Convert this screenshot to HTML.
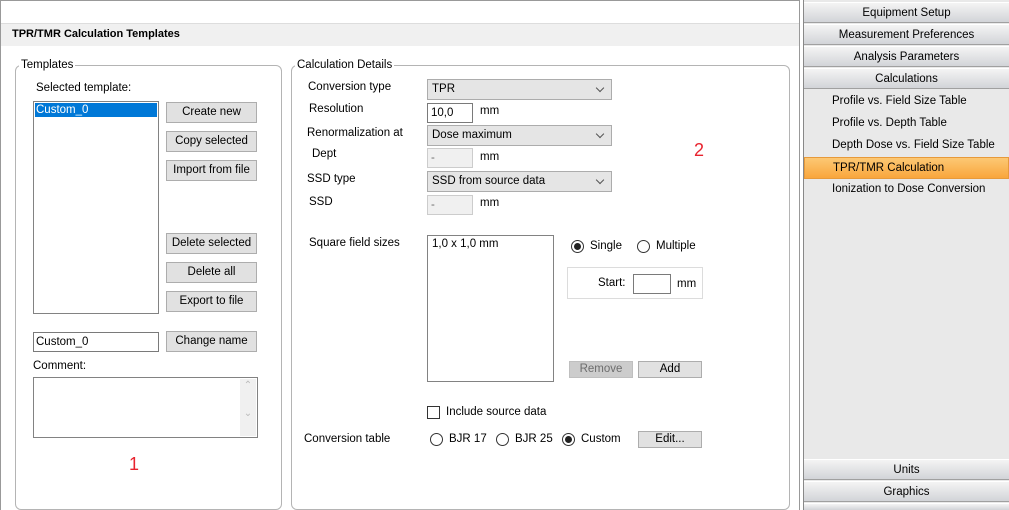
<!DOCTYPE html><html style="overflow:hidden;height:510px"><head><style>
*{box-sizing:border-box;margin:0;padding:0}
body{width:1009px;height:510px;overflow:hidden;background:#fff;font-family:"Liberation Sans",sans-serif;font-size:11.5px;color:#000;position:relative}
.a{position:absolute;white-space:nowrap}
.btn{position:absolute;background:#e1e1e1;border:1px solid #adadad;text-align:center;line-height:19px;height:21px}
.grp{position:absolute;border:1px solid #b4b4b4;border-radius:6px}
.lg{position:absolute;background:#fff;padding:0 2px;top:-8px;left:3px;line-height:14px}
.cb{position:absolute;background:#e5e5e5;border:1px solid #acacac;height:21px;line-height:19px;padding-left:4px}
.cb:after{content:"";position:absolute;right:8px;top:5px;width:5px;height:5px;border-right:1px solid #555;border-bottom:1px solid #555;transform:rotate(45deg)}
.tb{position:absolute;border:1px solid #7a7a7a;background:#fff;height:21px;line-height:19px;padding-left:3px}
.dis{background:#f0f0f0;border-color:#ccc;color:#6d6d6d}
.rd{position:absolute;width:13px;height:13px;border:1px solid #333;border-radius:50%;background:#fff}
.rd.on:after{content:"";position:absolute;left:2px;top:2px;width:7px;height:7px;border-radius:50%;background:#222}
.hd{position:absolute;left:804px;width:205px;height:21px;text-align:center;line-height:21px;background:linear-gradient(#f4f4f4,#d2d4d8);border-top:1px solid #fff;border-bottom:1px solid #a0a0a0}
.it{position:absolute;left:832px;line-height:14px}
</style></head><body>
<div class="a" style="left:0;top:0;width:800px;height:510px;border-left:1px solid #999;border-top:1px solid #999;border-right:1px solid #999"></div>
<div class="a" style="left:1px;top:23px;width:798px;height:23px;background:#f0f0f0;border-top:1px solid #ddd"></div>
<div class="a" style="left:12px;top:28px;font-weight:bold;font-size:11px">TPR/TMR Calculation Templates</div>
<div class="a" style="left:803px;top:0;width:206px;height:510px;background:#e9e9e9;border-left:1px solid #888"></div>
<div class="hd" style="top:2px">Equipment Setup</div>
<div class="hd" style="top:24px">Measurement Preferences</div>
<div class="hd" style="top:46px">Analysis Parameters</div>
<div class="hd" style="top:68px">Calculations</div>
<div class="it" style="top:94px">Profile vs. Field Size Table</div>
<div class="it" style="top:116px">Profile vs. Depth Table</div>
<div class="it" style="top:138px">Depth Dose vs. Field Size Table</div>
<div class="a" style="left:804px;top:157px;width:205px;height:22px;background:linear-gradient(#fcc874,#f9a63c);border:1px solid #e79a3b"></div>
<div class="it" style="top:161px;left:833px">TPR/TMR Calculation</div>
<div class="it" style="top:182px">Ionization to Dose Conversion</div>
<div class="hd" style="top:459px">Units</div>
<div class="hd" style="top:481px">Graphics</div>
<div class="hd" style="top:503px;height:7px;border-bottom:0"></div>

<div class="grp" style="left:15px;top:65px;width:267px;height:445px"><div class="lg">Templates</div></div>
<div class="a" style="left:36px;top:82px">Selected template:</div>
<div class="a" style="left:33px;top:101px;width:126px;height:213px;border:1px solid #828282"></div>
<div class="a" style="left:35px;top:103px;width:122px;height:14px;background:#0078d7;color:#fff;line-height:14px;padding-left:1px">Custom_0</div>
<div class="btn" style="left:166px;top:102px;width:91px">Create new</div>
<div class="btn" style="left:166px;top:131px;width:91px">Copy selected</div>
<div class="btn" style="left:166px;top:160px;width:91px">Import from file</div>
<div class="btn" style="left:166px;top:233px;width:91px">Delete selected</div>
<div class="btn" style="left:166px;top:262px;width:91px">Delete all</div>
<div class="btn" style="left:166px;top:291px;width:91px">Export to file</div>
<div class="tb" style="left:33px;top:332px;width:126px;height:20px;line-height:18px;padding-left:2px">Custom_0</div>
<div class="btn" style="left:166px;top:331px;width:91px">Change name</div>
<div class="a" style="left:33px;top:360px">Comment:</div>
<div class="a" style="left:33px;top:377px;width:225px;height:61px;border:1px solid #828282"></div>
<div class="a" style="left:240px;top:379px;width:16px;height:57px;background:#f0f0f0;color:#bbb;font-size:10px;text-align:center;line-height:14px">&#8963;<br><br>&#8964;</div>
<div class="a" style="left:129px;top:454px;color:#e8232e;font-size:18px">1</div>

<div class="grp" style="left:291px;top:65px;width:499px;height:445px"><div class="lg">Calculation Details</div></div>
<div class="a" style="left:308px;top:81px">Conversion type</div>
<div class="cb" style="left:427px;top:79px;width:185px">TPR</div>
<div class="a" style="left:309px;top:103px">Resolution</div>
<div class="tb" style="left:427px;top:103px;width:46px;height:20px;line-height:18px">10,0</div>
<div class="a" style="left:480px;top:105px">mm</div>
<div class="a" style="left:307px;top:127px">Renormalization at</div>
<div class="cb" style="left:427px;top:125px;width:185px">Dose maximum</div>
<div class="a" style="left:312px;top:148px">Dept</div>
<div class="tb dis" style="left:427px;top:148px;width:46px;height:20px">-</div>
<div class="a" style="left:480px;top:151px">mm</div>
<div class="a" style="left:307px;top:173px">SSD type</div>
<div class="cb" style="left:427px;top:171px;width:185px">SSD from source data</div>
<div class="a" style="left:309px;top:196px">SSD</div>
<div class="tb dis" style="left:427px;top:195px;width:46px;height:20px">-</div>
<div class="a" style="left:480px;top:197px">mm</div>
<div class="a" style="left:309px;top:237px">Square field sizes</div>
<div class="a" style="left:427px;top:235px;width:127px;height:147px;border:1px solid #828282;padding:2px 0 0 4px">1,0 x 1,0 mm</div>
<div class="rd on" style="left:571px;top:240px"></div><div class="a" style="left:590px;top:240px">Single</div>
<div class="rd" style="left:637px;top:240px"></div><div class="a" style="left:656px;top:240px">Multiple</div>
<div class="a" style="left:567px;top:267px;width:136px;height:32px;border:1px solid #dcdcdc"></div>
<div class="a" style="left:598px;top:277px">Start:</div>
<div class="tb" style="left:633px;top:274px;width:38px;height:20px"></div>
<div class="a" style="left:677px;top:278px">mm</div>
<div class="btn" style="left:569px;top:361px;width:64px;height:17px;line-height:15px;background:#ccc;border-color:#bfbfbf;color:#6d6d6d">Remove</div>
<div class="btn" style="left:638px;top:361px;width:64px;height:17px;line-height:15px">Add</div>
<div class="a" style="left:427px;top:406px;width:13px;height:13px;border:1px solid #333"></div>
<div class="a" style="left:446px;top:406px">Include source data</div>
<div class="a" style="left:304px;top:433px">Conversion table</div>
<div class="rd" style="left:430px;top:433px"></div><div class="a" style="left:449px;top:433px">BJR 17</div>
<div class="rd" style="left:496px;top:433px"></div><div class="a" style="left:515px;top:433px">BJR 25</div>
<div class="rd on" style="left:562px;top:433px"></div><div class="a" style="left:581px;top:433px">Custom</div>
<div class="btn" style="left:638px;top:431px;width:64px;height:17px;line-height:15px">Edit...</div>
<div class="a" style="left:694px;top:140px;color:#e8232e;font-size:18px">2</div>
</body></html>
